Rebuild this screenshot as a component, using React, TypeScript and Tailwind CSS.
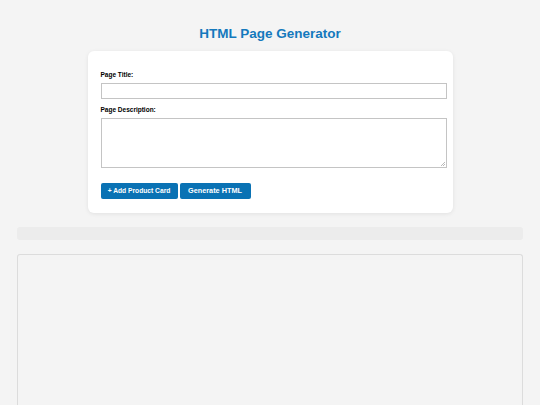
export default function App() {
  return (
    <div className="flex h-[405px] w-full flex-col overflow-hidden bg-[#f4f4f4] px-[17px] pt-[25px]" style={{ fontFamily: '"Liberation Sans", Arial, sans-serif' }}>
      <h1 className="text-center text-[13.5px] font-bold leading-[18px] text-[#1479bd]">HTML Page Generator</h1>
      <div className="mx-auto mt-[8px] w-[365px] rounded-[6px] bg-white px-[13px] pt-[20px] pb-[14px] shadow-[0_1px_4px_rgba(0,0,0,0.08)]">
        <div className="text-[6.5px] font-bold leading-[8px] text-black">Page Title:</div>
        <div className="mt-[4px] h-[16px] w-[346px] border border-[#c4c4c4] bg-white"></div>
        <div className="mt-[7px] text-[6.5px] font-bold leading-[8px] text-black">Page Description:</div>
        <div className="relative mt-[4px] h-[50px] w-[346px] border border-[#c4c4c4] bg-white">
          <svg className="absolute right-[1px] bottom-[1px]" width="5" height="5" viewBox="0 0 5 5">
            <path d="M1 5 L5 1 M3 5 L5 3" stroke="#aaa" strokeWidth="0.8" />
          </svg>
        </div>
        <div className="mt-[15px] flex gap-[2px]">
          <button className="flex h-[16px] w-[77px] items-center justify-center rounded-[2px] bg-[#0a72b4] text-[6.7px] font-bold text-white">+ Add Product Card</button>
          <button className="flex h-[16px] w-[71px] items-center justify-center rounded-[2px] bg-[#0a72b4] text-[7.3px] font-bold text-white">Generate HTML</button>
        </div>
      </div>
      <div className="mt-[14px] h-[13px] w-full shrink-0 rounded-[3px] bg-[#ececec]"></div>
      <div className="mt-[14px] min-h-[160px] w-full flex-1 rounded-t-[3px] border border-b-0 border-[#dcdcdc] bg-[#f4f4f4]"></div>
    </div>
  );
}
